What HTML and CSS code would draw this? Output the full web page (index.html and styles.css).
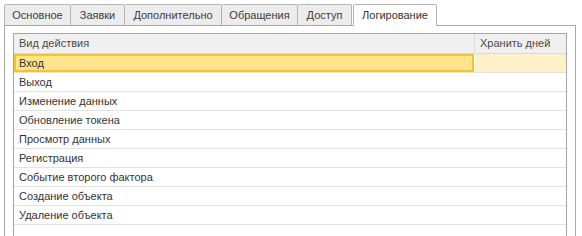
FILE: index.html
```html
<!DOCTYPE html>
<html lang="ru">
<head>
  <meta charset="UTF-8">
  <title>Логирование</title>
  <link rel="stylesheet" href="styles.css">
</head>
<body>
  <div class="tabs">
    <div class="tab" style="width: 67px">Основное</div>
    <div class="tab" style="width: 54px">Заявки</div>
    <div class="tab" style="width: 97px">Дополнительно</div>
    <div class="tab" style="width: 76px">Обращения</div>
    <div class="tab" style="width: 54px">Доступ</div>
    <div class="tab active" style="width: 84px">Логирование</div>
  </div>

  <div class="panel">
    <div class="grid">
      <div class="row head">
        <div class="cell col-action">Вид действия</div>
        <div class="cell col-days">Хранить дней</div>
      </div>
      <div class="row selected">
        <div class="cell col-action">Вход</div>
        <div class="cell col-days"></div>
      </div>
      <div class="row"><div class="cell col-action">Выход</div><div class="cell col-days"></div></div>
      <div class="row"><div class="cell col-action">Изменение данных</div><div class="cell col-days"></div></div>
      <div class="row"><div class="cell col-action">Обновление токена</div><div class="cell col-days"></div></div>
      <div class="row"><div class="cell col-action">Просмотр данных</div><div class="cell col-days"></div></div>
      <div class="row"><div class="cell col-action">Регистрация</div><div class="cell col-days"></div></div>
      <div class="row"><div class="cell col-action">Событие второго фактора</div><div class="cell col-days"></div></div>
      <div class="row"><div class="cell col-action">Создание объекта</div><div class="cell col-days"></div></div>
      <div class="row"><div class="cell col-action">Удаление объекта</div><div class="cell col-days"></div></div>
      <div class="row empty"></div>
    </div>
  </div>
</body>
</html>
```

FILE: styles.css
```css
body {
  margin: 0;
  padding: 4px 0 0 4px;
  background: #fff;
  font-family: "Liberation Sans", Arial, sans-serif;
  font-size: 11px;
  color: #333;
  overflow: hidden;
}
.tabs {
  display: flex;
  height: 21px;
  position: relative;
  z-index: 1;
}
.tab {
  box-sizing: border-box;
  height: 21px;
  line-height: 21px;
  text-align: center;
  background: #ececec;
  border: 1px solid #b4b4b4;
  border-bottom: none;
  border-left: none;
  border-radius: 2px 2px 0 0;
  color: #3c3c3c;
  white-space: nowrap;
}
.tab:first-child {
  border-left: 1px solid #b4b4b4;
}
.tab.active {
  background: #fff;
  height: 22px;
  border-left: 1px solid #b4b4b4;
  margin-left: 1px;
  color: #333;
}
.panel {
  box-sizing: border-box;
  width: 572px;
  height: 240px;
  border: 1px solid #a9a9a9;
  padding: 7px 8px 0 8px;
  background: #fff;
}
.grid {
  width: 554px;
  height: 230px;
  box-sizing: border-box;
  border: 1px solid #a6a6a6;
  border-bottom: none;
}
.row {
  display: flex;
  height: 18px;
  border-bottom: 1px solid #e3e3e3;
}
.row.head {
  height: 19px;
  background: #f0f0f0;
  border-bottom: 1px solid #dadada;
  color: #4a4a4a;
}
.row.empty {
  border-bottom: none;
}
.cell {
  box-sizing: border-box;
  line-height: 18px;
  padding-left: 5px;
  white-space: nowrap;
}
.head .cell {
  line-height: 19px;
}
.col-action {
  width: 461px;
}
.col-days {
  width: 91px;
}
.head .col-action {
  border-right: 1px solid #dcdcdc;
}
.selected .col-action {
  background: #fee48c;
  border: 2px solid #f6c522;
  line-height: 14px;
  padding-left: 3px;
  margin-right: 1px;
}
.selected .col-days {
  background: #fdf2c7;
}
```
